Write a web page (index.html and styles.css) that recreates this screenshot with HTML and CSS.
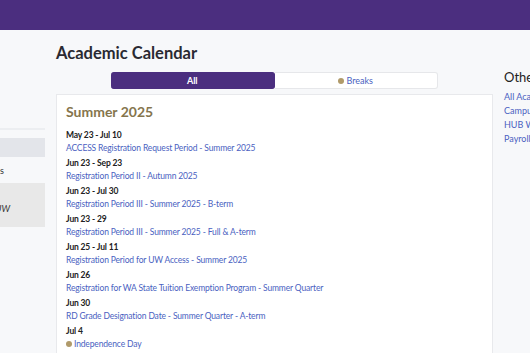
FILE: index.html
```html
<!DOCTYPE html>
<html lang="en">
<head>
    <meta charset="UTF-8">
    <meta name="viewport" content="width=device-width, initial-scale=1.0">
    <title>Academic Calendar</title>
    <link rel="stylesheet" href="styles.css">
</head>
<body>

<header class="topbar"></header>

<div class="page">
    <nav class="sidenav">
        <div class="nav-rule"></div>
        <div class="nav-item nav-active"></div>
        <div class="nav-item nav-plain">Deadlines</div>
        <div class="nav-item nav-box"><em>UW</em></div>
    </nav>

    <main class="main">
        <h1 class="page-title">Academic Calendar</h1>

        <div class="tabs">
            <div class="tab tab-active">All</div>
            <div class="tab"><span class="dot"></span><a href="#">Breaks</a></div>
        </div>

        <section class="card">
            <h2 class="term">Summer 2025</h2>

            <div class="event">
                <div class="event-date">May 23 - Jul 10</div>
                <a href="#">ACCESS Registration Request Period - Summer 2025</a>
            </div>
            <div class="event">
                <div class="event-date">Jun 23 - Sep 23</div>
                <a href="#">Registration Period II - Autumn 2025</a>
            </div>
            <div class="event">
                <div class="event-date">Jun 23 - Jul 30</div>
                <a href="#">Registration Period III - Summer 2025 - B-term</a>
            </div>
            <div class="event">
                <div class="event-date">Jun 23 - 29</div>
                <a href="#">Registration Period III - Summer 2025 - Full &amp; A-term</a>
            </div>
            <div class="event">
                <div class="event-date">Jun 25 - Jul 11</div>
                <a href="#">Registration Period for UW Access - Summer 2025</a>
            </div>
            <div class="event">
                <div class="event-date">Jun 26</div>
                <a href="#">Registration for WA State Tuition Exemption Program - Summer Quarter</a>
            </div>
            <div class="event">
                <div class="event-date">Jun 30</div>
                <a href="#">RD Grade Designation Date - Summer Quarter - A-term</a>
            </div>
            <div class="event">
                <div class="event-date">Jul 4</div>
                <span class="dot"></span><a href="#">Independence Day</a>
            </div>
        </section>
    </main>

    <aside class="aside">
        <h3 class="aside-title">Other Calendars</h3>
        <a href="#">All Academic Calendars</a>
        <a href="#">Campus Events</a>
        <a href="#">HUB Weekly</a>
        <a href="#">Payroll Calendar</a>
    </aside>
</div>

</body>
</html>
```

FILE: styles.css
```css
body {
    margin: 0;
    font-family: Lato, "Open Sans", sans-serif;
    background-color: #f7f8fa;
    color: #222;
    overflow: hidden;
}
a {
    color: #4a5fc1;
    text-decoration: none;
}
.topbar {
    height: 30px;
    background-color: #4b2e7f;
}
.page {
    display: flex;
    gap: 11px;
}
.sidenav {
    width: 45px;
    flex: none;
    padding-top: 98px;
    overflow: hidden;
}
.nav-rule {
    height: 2px;
    background-color: #eceef1;
    margin-bottom: 8px;
}
.nav-item {
    display: flex;
    justify-content: flex-end;
    white-space: nowrap;
    font-size: 9px;
    color: #333;
    height: 19px;
    align-items: center;
}
.nav-active {
    background-color: #e3e5ea;
}
.nav-plain {
    margin-top: 4px;
    margin-right: 41px;
}
.nav-box {
    margin-top: 3px;
    background-color: #e8e8e8;
    height: 44px;
    align-items: flex-end;
    padding: 0 35px 13px 0;
    box-sizing: border-box;
}
.main {
    width: 437px;
    flex: none;
}
.page-title {
    margin: 12px 0 7px;
    font-size: 16.5px;
    font-weight: 700;
    line-height: 23px;
    color: #2a2a32;
}
.tabs {
    display: flex;
    margin: 0 55px;
    height: 17px;
}
.tab {
    flex: 1;
    display: flex;
    align-items: center;
    justify-content: center;
    font-size: 9px;
    background-color: #fff;
    border: 1px solid #e6e7ea;
    border-left: none;
    border-radius: 0 3px 3px 0;
}
.tab-active {
    background-color: #4b2e7f;
    border-color: #4b2e7f;
    color: #fff;
    font-weight: 700;
    border-radius: 3px;
}
.dot {
    display: inline-block;
    width: 6px;
    height: 6px;
    border-radius: 50%;
    background-color: #b09a6a;
    margin-right: 2px;
}
.card {
    margin-top: 5px;
    background-color: #fff;
    border: 1px solid #e8e9ec;
    padding: 6px 9px;
    height: 300px;
}
.term {
    margin: 0 0 6px;
    font-size: 14px;
    font-weight: 700;
    color: #85754d;
    line-height: 22px;
}
.event {
    font-size: 8.5px;
    line-height: 13px;
    margin-bottom: 2px;
    letter-spacing: -0.15px;
}
.event-date {
    font-weight: 700;
    color: #222;
}
.aside {
    display: flex;
    flex-direction: column;
    padding-top: 38px;
    font-size: 9px;
    line-height: 14px;
    white-space: nowrap;
}
.aside-title {
    margin: 0 0 4px;
    font-size: 13px;
    font-weight: 400;
    line-height: 18px;
    color: #222;
}
```
